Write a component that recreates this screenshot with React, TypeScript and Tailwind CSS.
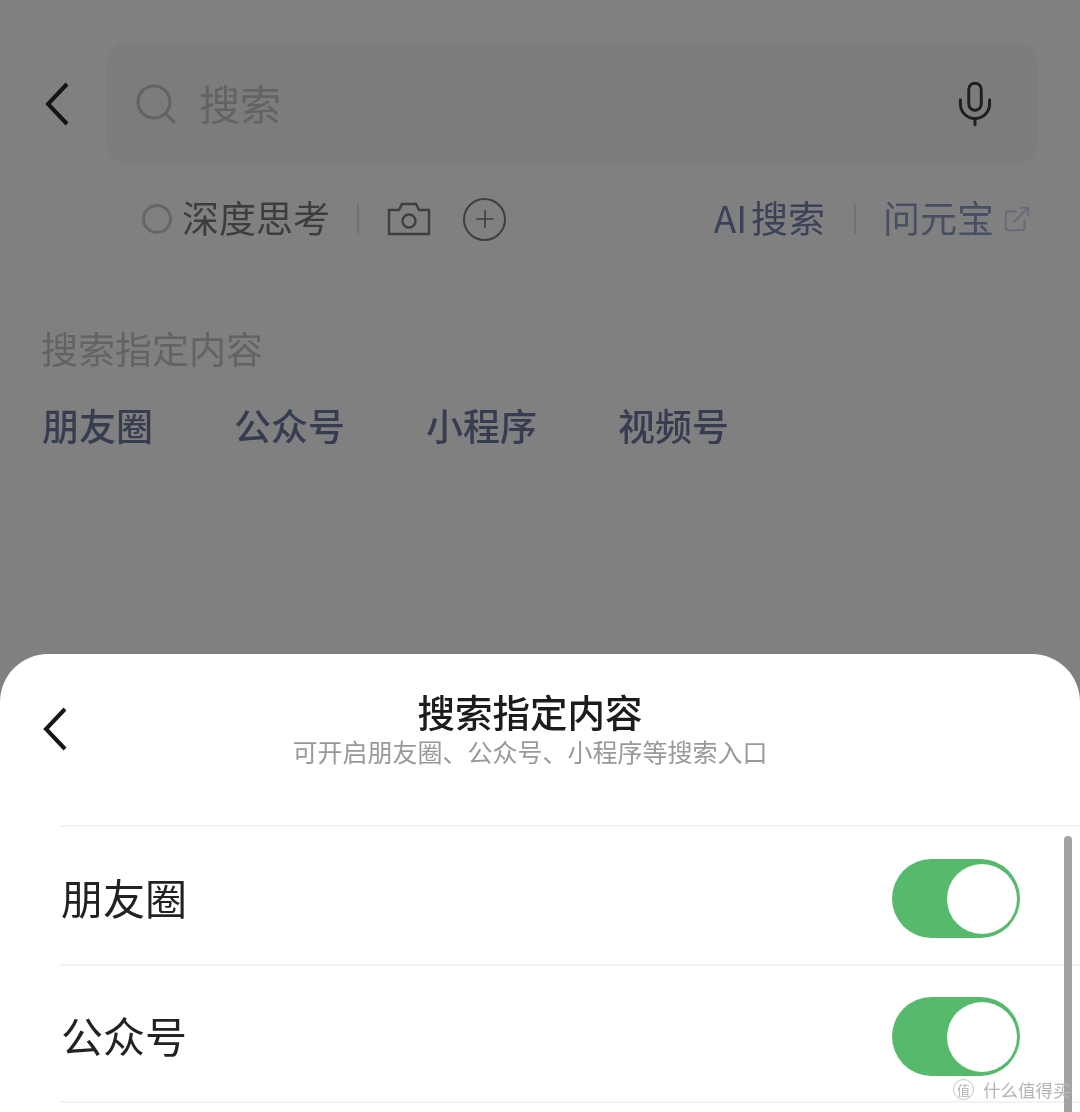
import { Search, Mic, Plus, ExternalLink } from 'lucide-react';

const cjk = 'font-["Noto_Sans_CJK_SC","Noto_Sans",sans-serif]';

function BackArrow({ className }: { className: string }) {
  return (
    <svg viewBox="0 0 24 44" fill="none" stroke="currentColor" strokeWidth={4} className={className}>
      <path d="M22 2 L3 22 L22 42" />
    </svg>
  );
}

function CameraIcon() {
  return (
    <svg viewBox="0 0 44 34" fill="none" stroke="currentColor" strokeWidth={2.4} className="ml-[28px] h-[34px] w-[44px] text-[#3f3f3f]">
      <path d="M2 8 H12 L15 2 H29 L32 8 H42 V32 H2 Z" />
      <circle cx="22" cy="19" r="6.5" />
    </svg>
  );
}

function Toggle() {
  return (
    <div className="flex h-[79px] w-[128px] items-center justify-end rounded-full bg-[#56b96b] pr-[3px]">
      <div className="h-[70px] w-[70px] rounded-full bg-white" />
    </div>
  );
}

function SettingRow({ label, height }: { label: string; height: string }) {
  return (
    <div className={`flex items-center justify-between border-b-2 border-[#f3f3f3] pr-[60px] pt-[6px] ${height}`}>
      <span className="ml-[1px] pb-[4px] text-[42px] leading-none text-[#222222]">{label}</span>
      <Toggle />
    </div>
  );
}

export default function App() {
  return (
    <div className={`relative flex h-[1112px] w-[1080px] flex-col overflow-hidden bg-[#808080] blur-[0.5px] ${cjk}`}>
      <div className="h-[654px] shrink-0 pt-[42px]">
        <div className="flex items-center pr-[42px]">
          <div className="flex w-[106px] shrink-0 pl-[45px]">
            <BackArrow className="h-[44px] w-[24px] text-[#141414]" />
          </div>
          <div className="flex h-[123px] flex-1 items-center rounded-[24px] bg-[#7c7c7c] pl-[26px] pr-[38px]">
            <Search className="h-[48px] w-[48px] text-[#636363]" strokeWidth={1.6} />
            <span className="ml-[19px] pb-[2px] text-[41px] leading-none text-[#636363]">搜索</span>
            <Mic className="ml-auto h-[50px] w-[50px] text-[#1e1e1e]" strokeWidth={1.4} />
          </div>
        </div>

        <div className="mt-[32px] flex h-[44px] items-center pl-[142px] pr-[48px]">
          <div className="h-[30px] w-[30px] rounded-full border-[3px] border-[#666666]" />
          <span className="ml-[10px] pb-[3px] text-[37px] leading-none text-[#3d3d3d]">深度思考</span>
          <div className="ml-[27px] h-[30px] w-[2px] bg-[#727272]" />
          <CameraIcon />
          <div className="ml-[32px] flex h-[43px] w-[43px] items-center justify-center rounded-full border-2 border-[#3f3f3f]">
            <Plus className="h-[28px] w-[28px] text-[#3f3f3f]" strokeWidth={1.4} />
          </div>
          <span className="ml-auto flex gap-[4px] pb-[3px] text-[37px] leading-none text-[#3a4158]">
            <span>AI</span>
            <span>搜索</span>
          </span>
          <div className="ml-[29px] h-[30px] w-[2px] bg-[#727272]" />
          <span className="ml-[27px] pb-[3px] text-[37px] leading-none text-[#484f62]">问元宝</span>
          <ExternalLink className="ml-[8px] h-[30px] w-[30px] text-[#666b78]" strokeWidth={1.6} />
        </div>

        <div className="mt-[89px] pl-[41px] text-[37px] leading-none text-[#636363]">搜索指定内容</div>

        <div className="mt-[40px] flex gap-[81px] pl-[42px] text-[37px] font-medium leading-none text-[#373d50]">
          <span>朋友圈</span>
          <span>公众号</span>
          <span>小程序</span>
          <span>视频号</span>
        </div>
      </div>

      <div className="flex-1 rounded-t-[48px] bg-white">
        <div className="relative flex h-[171px] flex-col items-center pt-[37px]">
          <BackArrow className="absolute left-[43px] top-[53px] h-[44px] w-[24px] text-[#161616]" />
          <div className="ml-[-20px] text-[37.5px] font-medium leading-[40px] text-[#1c1c1c]">搜索指定内容</div>
          <div className="ml-[-20px] mt-[3px] text-[25px] leading-[34px] text-[#999999]">可开启朋友圈、公众号、小程序等搜索入口</div>
        </div>
        <div className="ml-[60px] border-t-2 border-[#f3f3f3]">
          <SettingRow label="朋友圈" height="h-[139px]" />
          <SettingRow label="公众号" height="h-[137px]" />
        </div>
      </div>

      {/* scrollbar */}
      <div className="absolute bottom-0 left-[1064px] top-[836px] w-[8px] rounded-t-full bg-[#a3a3a3]" />

      {/* watermark */}
      <div className="absolute left-[953px] top-[1079px] flex items-center text-[#b4b4b4]">
        <div className="flex h-[21px] w-[21px] items-center justify-center rounded-full border border-[#c4c4c4] text-[13px] leading-none">值</div>
        <span className="ml-[9px] text-[17.5px] leading-[21px]">什么值得买</span>
      </div>
    </div>
  );
}
